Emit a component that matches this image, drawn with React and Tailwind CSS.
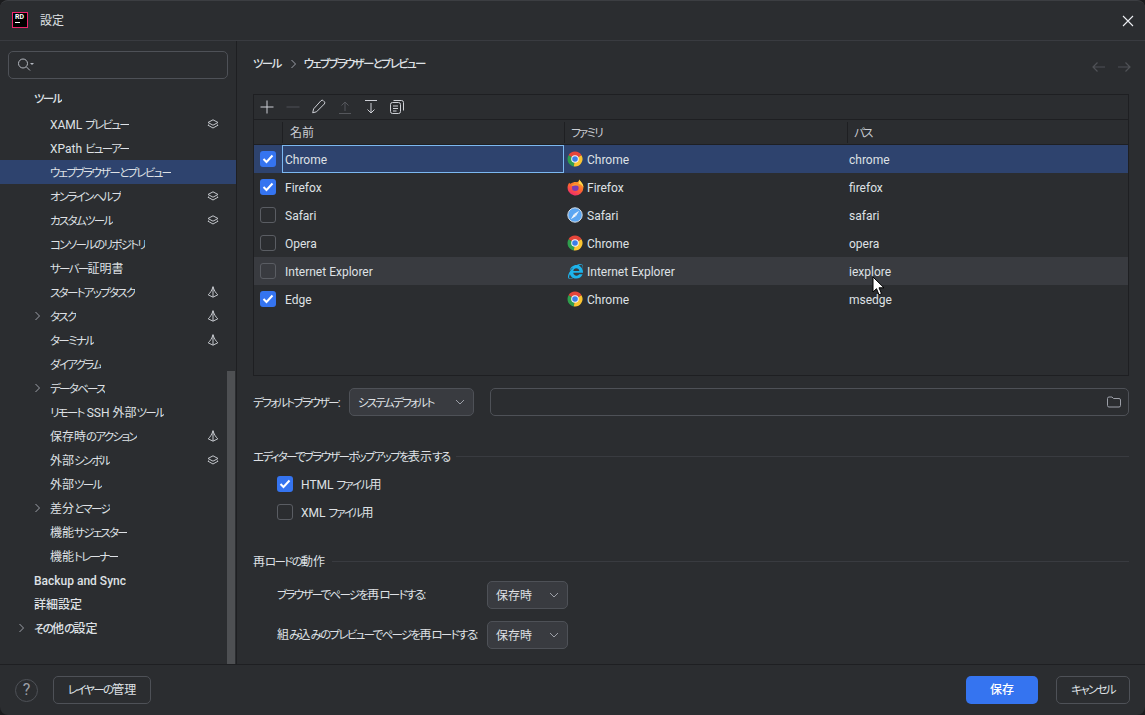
import React from "react";
import { FaInternetExplorer } from "react-icons/fa";

const uiFont = "font-['Roboto','Noto_Sans_CJK_JP',sans-serif] [font-feature-settings:'palt']";

const navItems = [
    { label: "ツール", root: true, first: true },
    { label: "XAML プレビュー", icon: "layers" },
    { label: "XPath ビューアー" },
    { label: "ウェブブラウザーとプレビュー", selected: true },
    { label: "オンラインヘルプ", icon: "layers" },
    { label: "カスタムツール", icon: "layers" },
    { label: "コンソールのリポジトリ" },
    { label: "サーバー証明書" },
    { label: "スタートアップタスク", icon: "sail" },
    { label: "タスク", icon: "sail", chevron: true },
    { label: "ターミナル", icon: "sail" },
    { label: "ダイアグラム" },
    { label: "データベース", chevron: true },
    { label: "リモート SSH 外部ツール" },
    { label: "保存時のアクション", icon: "sail" },
    { label: "外部シンボル", icon: "layers" },
    { label: "外部ツール" },
    { label: "差分とマージ", chevron: true },
    { label: "機能サジェスター" },
    { label: "機能トレーナー" },
    { label: "Backup and Sync", root: true },
    { label: "詳細設定", root: true },
    { label: "その他の設定", root: true, chevron: true },
];

const browsers = [
    { name: "Chrome", family: "Chrome", path: "chrome", checked: true, selected: true },
    { name: "Firefox", family: "Firefox", path: "firefox", checked: true },
    { name: "Safari", family: "Safari", path: "safari" },
    { name: "Opera", family: "Chrome", path: "opera" },
    { name: "Internet Explorer", family: "Internet Explorer", path: "iexplore", hover: true },
    { name: "Edge", family: "Chrome", path: "msedge", checked: true },
];

// the reference font has narrow kana, so kana runs get squeezed
function T({ children }) {
    return children.split(/([\u3040-\u30ff]+)/).map((part, i) =>
        i % 2 ? (
            <span key={i} className="text-[11.5px] tracking-[-1.7px]">{part}</span>
        ) : (
            part
        )
    );
}

function ChromeIcon() {
    return (
        <svg width="16" height="16" viewBox="0 0 16 16">
            <path d="M8 8 1.5 4.25A7.5 7.5 0 0 1 14.5 4.25Z" fill="#e5453a" />
            <path d="M8 8 1.5 4.25A7.5 7.5 0 0 0 6.8 15.4Z" fill="#2f9e4d" />
            <path d="M8 8 14.5 4.25A7.5 7.5 0 0 1 6.8 15.4Z" fill="#fbc531" />
            <circle cx="8" cy="8" r="3.8" fill="#f4f4f4" />
            <circle cx="8" cy="8" r="2.8" fill="#3b7de8" />
        </svg>
    );
}

function FirefoxIcon() {
    return (
        <svg width="17" height="17" viewBox="0 0 18 18" className="shrink-0">
            <defs>
                <linearGradient id="ffBody" x1="0.8" y1="0" x2="0.3" y2="1">
                    <stop offset="0" stopColor="#ffb52e" />
                    <stop offset="0.5" stopColor="#ff6a2b" />
                    <stop offset="1" stopColor="#f0286f" />
                </linearGradient>
            </defs>
            <path d="M13 .4c.4 1.6 4.400 3.800 4.400 8.600a8.400 8.400 0 1 1-16.400-2.500c.6-1.400 1-1.800 1.200-2.600.7.8 1 1.200 1.500 1.200C5.600 3.600 8.500 3 10 3.300 11.300 3.500 12.500 2.500 13 .4Z" fill="url(#ffBody)" />
            <path d="M13 .4c.4 1.600 4.400 3.800 4.400 8.300-1-2-3.400-3.400-5.300-3.900C13 3.500 13 2 13 .4Z" fill="#ffd84a" />
            <circle cx="8.800" cy="9.200" r="3.500" fill="#7b3bb5" />
            <path d="M4.500 7c1.500-1.700 4.500-2.200 6.500-1.200 1 .5 1.800 1.400 2.100 2.400-1.300-1.100-3.100-1.500-4.600-1.200C7 7.300 6 7.600 4.500 7Z" fill="#ff9a2e" />
        </svg>
    );
}

function SafariIcon() {
    return (
        <svg width="16" height="16" viewBox="0 0 16 16">
            <circle cx="8" cy="8" r="7.200" fill="#5ba6f2" stroke="#d5dde6" strokeWidth="1" />
            <path d="M12.200 3.800 9 9 7 7Z" fill="#e8f1fb" />
            <path d="M3.800 12.200 7 7 9 9Z" fill="#f4f6f8" />
        </svg>
    );
}

function FamilyIcon({ family }) {
    if (family === "Firefox") return <FirefoxIcon />;
    if (family === "Safari") return <SafariIcon />;
    if (family === "Internet Explorer") return <FaInternetExplorer size={15} color="#1db4ec" />;
    return <ChromeIcon />;
}

function LayersIcon() {
    return (
        <svg width="12" height="10" viewBox="0 0 12 10" fill="none" stroke="#c4c7cc" strokeWidth="1">
            <path d="M6 .8 11 3.500 6 6.200 1 3.500Z" />
            <path d="M1.500 5.500 1 6.200 6 9 11 6.200 10.500 5.500" />
        </svg>
    );
}

function SailIcon() {
    return (
        <svg width="12" height="12" viewBox="0 0 12 12" fill="none" stroke="#c4c7cc" strokeWidth="1">
            <path d="M6 .6C5.200 4 3.200 7 1.200 8.800L6 11.200 10.800 8.800C8.800 7 6.800 4 6 .6Z" />
            <path d="M6 1v10" />
        </svg>
    );
}

function Chevron() {
    return (
        <svg width="7" height="10" viewBox="0 0 7 10" fill="none" stroke="#9da0a8" strokeWidth="1">
            <path d="M1.500 1 5.500 5 1.500 9" />
        </svg>
    );
}

function ChevronDown() {
    return (
        <svg width="10" height="6" viewBox="0 0 10 6" fill="none" stroke="#9da0a8" strokeWidth="1">
            <path d="M1 1 5 5 9 1" />
        </svg>
    );
}

function CheckBox({ checked }) {
    if (checked) {
        return (
            <span className="flex h-4 w-4 shrink-0 items-center justify-center rounded-[3px] bg-[#3574f0]">
                <svg width="12" height="10" viewBox="0 0 12 10" fill="none" stroke="#fff" strokeWidth="2">
                    <path d="M1.500 5 4.500 8 10.500 1.500" />
                </svg>
            </span>
        );
    }
    return <span className="h-4 w-4 shrink-0 rounded-[3px] border border-[#5a5d63]" />;
}

function NavRow({ item }) {
    return (
        <div
            className={`flex h-6 shrink-0 items-center pr-[17px] ${item.root ? "pl-[18px]" : "pl-[34px]"} ${item.selected ? "bg-[#2e436e]" : ""} ${item.first ? "mb-[2px]" : ""}`}
        >
            <span className="flex w-4 shrink-0 items-center">{item.chevron && <Chevron />}</span>
            <span className={`truncate pt-[2px] text-[#dfe1e5] ${item.root ? "font-medium" : ""}`}>
                <T>{item.label}</T>
            </span>
            <span className="ml-auto flex items-center">
                {item.icon === "layers" && <LayersIcon />}
                {item.icon === "sail" && <SailIcon />}
            </span>
        </div>
    );
}

function Sidebar() {
    return (
        <aside className="relative flex w-[237px] shrink-0 flex-col overflow-hidden border-r border-[#1e1f22]">
            <div className="mx-2 mt-[10px] flex h-7 shrink-0 items-center gap-[1px] rounded-[5px] border border-[#4e5157] px-[9px]">
                <svg width="18" height="14" viewBox="0 0 18 14" fill="none" stroke="#b4b8bf" strokeWidth="1">
                    <circle cx="5" cy="5.500" r="4.500" />
                    <path d="M8.500 9 12 12.500" />
                    <path d="M12 5h4l-2 2Z" fill="#b4b8bf" stroke="none" />
                </svg>
            </div>
            <nav className="mt-[7px] flex flex-col">
                {navItems.map((item) => (
                    <NavRow key={item.label} item={item} />
                ))}
            </nav>
            <div className="absolute bottom-0 right-[1px] top-[330px] w-2 bg-[#4e5053]" />
        </aside>
    );
}

function ToolIcon({ children }) {
    return (
        <svg width="16" height="16" viewBox="0 0 16 16" fill="none" stroke="#ced0d6" strokeWidth="1">
            {children}
        </svg>
    );
}

function Toolbar() {
    return (
        <div className="flex h-[25px] shrink-0 items-center gap-[10px] border-b border-[#1e1f22] pl-[5px]">
            <ToolIcon><path d="M8 1.500v13M1.500 8h13" /></ToolIcon>
            <ToolIcon><path d="M1.500 8h13" stroke="#4f5156" /></ToolIcon>
            <ToolIcon>
                <path d="M10.500 2.200a1.600 1.600 0 0 1 2.300 0l1 1a1.600 1.600 0 0 1 0 2.300L6 13.300l-3.800 1 .9-3.900Z" transform="translate(-.5 -.5)" />
            </ToolIcon>
            <ToolIcon>
                <path d="M8 3v9M4.500 6.500 8 3l3.500 3.500M2 14.500h12" stroke="#55575c" />
            </ToolIcon>
            <ToolIcon><path d="M2 1.500h12M8 4v10M4.500 10.500 8 14l3.500-3.500" /></ToolIcon>
            <ToolIcon>
                <rect x="1.500" y="3.500" width="10" height="11" rx="2" />
                <path d="M4.500 1.500h8a2 2 0 0 1 2 2v8M4 7h5M4 9.500h5M4 12h3.500" />
            </ToolIcon>
        </div>
    );
}

function HeaderCell({ label, className }) {
    return (
        <div className={`flex h-full items-center ${className}`}>
            <span className="h-[21px] w-px shrink-0 bg-[#1e1f22]" />
            <span className="pt-[2px] text-[#c9ccd3]"><T>{label}</T></span>
        </div>
    );
}

function BrowserTable() {
    const cols = "grid grid-cols-[28px_282px_283px_1fr]";
    return (
        <div className="mt-[20px] flex h-[282px] shrink-0 flex-col border border-[#1e1f22]">
            <Toolbar />
            <div className={`${cols} h-[25px] shrink-0 border-b border-[#1e1f22]`}>
                <div />
                <HeaderCell label="名前" className="gap-[7px]" />
                <HeaderCell label="ファミリ" className="gap-[6px]" />
                <HeaderCell label="パス" className="gap-[6px]" />
            </div>
            {browsers.map((b) => (
                <div
                    key={b.name}
                    className={`${cols} h-7 shrink-0 items-center ${b.selected ? "bg-[#2e436e]" : ""} ${b.hover ? "bg-[#393b40]" : ""}`}
                >
                    <div className="flex justify-center">
                        <CheckBox checked={b.checked} />
                    </div>
                    <div className={`flex h-7 items-center pt-[2px] ${b.selected ? "border border-[#7cb8f0] pl-[2px]" : "pl-[3px]"}`}>
                        {b.name}
                    </div>
                    <div className="flex items-center gap-[4px] pl-[3px]">
                        <span className="flex w-4 items-center justify-center">
                            <FamilyIcon family={b.family} />
                        </span>
                        <span className="pt-[2px]">{b.family}</span>
                    </div>
                    <div className="pl-[2px] pt-[2px]">{b.path}</div>
                </div>
            ))}
        </div>
    );
}

function Select({ label, className }) {
    return (
        <div className={`flex h-7 shrink-0 items-center justify-between rounded-[5px] border border-[#4e5157] bg-[#393b40] pl-[8px] pr-[8px] ${className}`}>
            <span className="pt-[2px]"><T>{label}</T></span>
            <ChevronDown />
        </div>
    );
}

function SectionTitle({ label, className }) {
    return (
        <div className={`flex shrink-0 items-center gap-[7px] ${className}`}>
            <span className="shrink-0 pt-[2px]"><T>{label}</T></span>
            <span className="h-px flex-1 bg-[#393b40]" />
        </div>
    );
}

function MainPanel() {
    return (
        <main className="flex min-w-0 flex-1 flex-col pl-[16px] pr-[16px]">
            <div className="mt-[13px] flex h-5 shrink-0 items-center">
                <span className="font-medium"><T>ツール</T></span>
                <span className="ml-[9px] mr-[7px]"><Chevron /></span>
                <span className="font-medium"><T>ウェブブラウザーとプレビュー</T></span>
                <span className="-mr-[2px] ml-auto mt-[6px] flex gap-[13px]">
                    <svg width="13" height="12" viewBox="0 0 13 12" fill="none" stroke="#4f5156" strokeWidth="1.200">
                        <path d="M13 6H1M5.500 1.500 1 6l4.500 4.500" />
                    </svg>
                    <svg width="13" height="12" viewBox="0 0 13 12" fill="none" stroke="#4f5156" strokeWidth="1.200">
                        <path d="M0 6h12M7.500 1.500 12 6l-4.500 4.500" />
                    </svg>
                </span>
            </div>
            <BrowserTable />
            <div className="mt-3 flex shrink-0 items-center">
                <span className="w-[96px] shrink-0 whitespace-nowrap pt-[2px]"><T>デフォルトブラウザー:</T></span>
                <Select label="システムデフォルト" className="w-[125px]" />
                <div className="ml-4 flex h-7 flex-1 items-center justify-end rounded-[5px] border border-[#4e5157] pr-[7px]">
                    <svg width="14" height="12" viewBox="0 0 14 12" fill="none" stroke="#9da0a8" strokeWidth="1">
                        <path d="M.5 2.500a1.500 1.500 0 0 1 1.500-1.500h3l1.500 1.500h5.500a1.500 1.500 0 0 1 1.500 1.500v5.500a1.500 1.500 0 0 1-1.500 1.500H2a1.500 1.500 0 0 1-1.500-1.500Z" />
                    </svg>
                </div>
            </div>
            <SectionTitle label="エディターでブラウザーポップアップを表示する" className="mt-[30px]" />
            <div className="mt-[4px] flex h-7 shrink-0 items-center gap-2 pl-6">
                <CheckBox checked />
                <span className="pt-[2px]"><T>HTML ファイル用</T></span>
            </div>
            <div className="flex h-7 shrink-0 items-center gap-2 pl-6">
                <CheckBox />
                <span className="pt-[2px]"><T>XML ファイル用</T></span>
            </div>
            <SectionTitle label="再ロードの動作" className="mt-[25px]" />
            <div className="mt-[9px] flex shrink-0 items-center pl-6">
                <span className="w-[210px] shrink-0 whitespace-nowrap pt-[2px]"><T>ブラウザーでページを再ロードする:</T></span>
                <Select label="保存時" className="w-[81px]" />
            </div>
            <div className="mt-3 flex shrink-0 items-center pl-6">
                <span className="w-[210px] shrink-0 whitespace-nowrap pt-[2px]"><T>組み込みのプレビューでページを再ロードする:</T></span>
                <Select label="保存時" className="w-[81px]" />
            </div>
        </main>
    );
}

export default function App() {
    return (
        <div className={`relative h-[715px] w-[1145px] overflow-hidden bg-[#1b1c1e] text-[12px] text-[#dfe1e5] ${uiFont}`}>
            <div className="flex h-full flex-col overflow-hidden rounded-[8px] border-t border-[#3c3e42] bg-[#2b2d30]">
                <header className="flex h-10 shrink-0 items-center border-b border-[#393b40] pl-3 pr-[10px]">
                    <div className="mb-[1px] flex h-4 w-4 flex-col border border-[#f0256e] bg-black pl-[2px] pt-[1px] leading-none">
                        <span className="text-[7px] font-bold leading-[7px] text-white">RD</span>
                        <span className="mt-[1px] h-px w-[5px] bg-white" />
                    </div>
                    <span className="ml-3">設定</span>
                    <svg className="ml-auto" width="14" height="14" viewBox="0 0 14 14" fill="none" stroke="#eceef2" strokeWidth="1.100">
                        <path d="M2 2l10 10M12 2 2 12" />
                    </svg>
                </header>
                <div className="flex min-h-0 flex-1">
                    <Sidebar />
                    <MainPanel />
                </div>
                <footer className="flex h-[51px] shrink-0 items-center border-t border-[#1e1f22] pl-[15px] pr-[15px]">
                    <div className="flex h-[23px] w-[23px] items-center justify-center rounded-full border border-[#4e5157] text-[16px] text-[#9da0a8]">?</div>
                    <button className="ml-[15px] h-7 w-[98px] rounded-[5px] border border-[#4e5157]"><T>レイヤーの管理</T></button>
                    <button className="ml-auto h-7 w-[72px] rounded-[5px] bg-[#3574f0] font-medium text-white">保存</button>
                    <button className="ml-[18px] h-7 w-[74px] rounded-[5px] border border-[#4e5157]"><T>キャンセル</T></button>
                </footer>
            </div>
            <svg className="absolute left-[872px] top-[276px]" width="14" height="20" viewBox="0 0 14 20">
                <path d="M1 1v15l3.500-3.300 2.500 6 2.500-1-2.500-5.900h5Z" fill="#fff" stroke="#000" strokeWidth="1" />
            </svg>
        </div>
    );
}
